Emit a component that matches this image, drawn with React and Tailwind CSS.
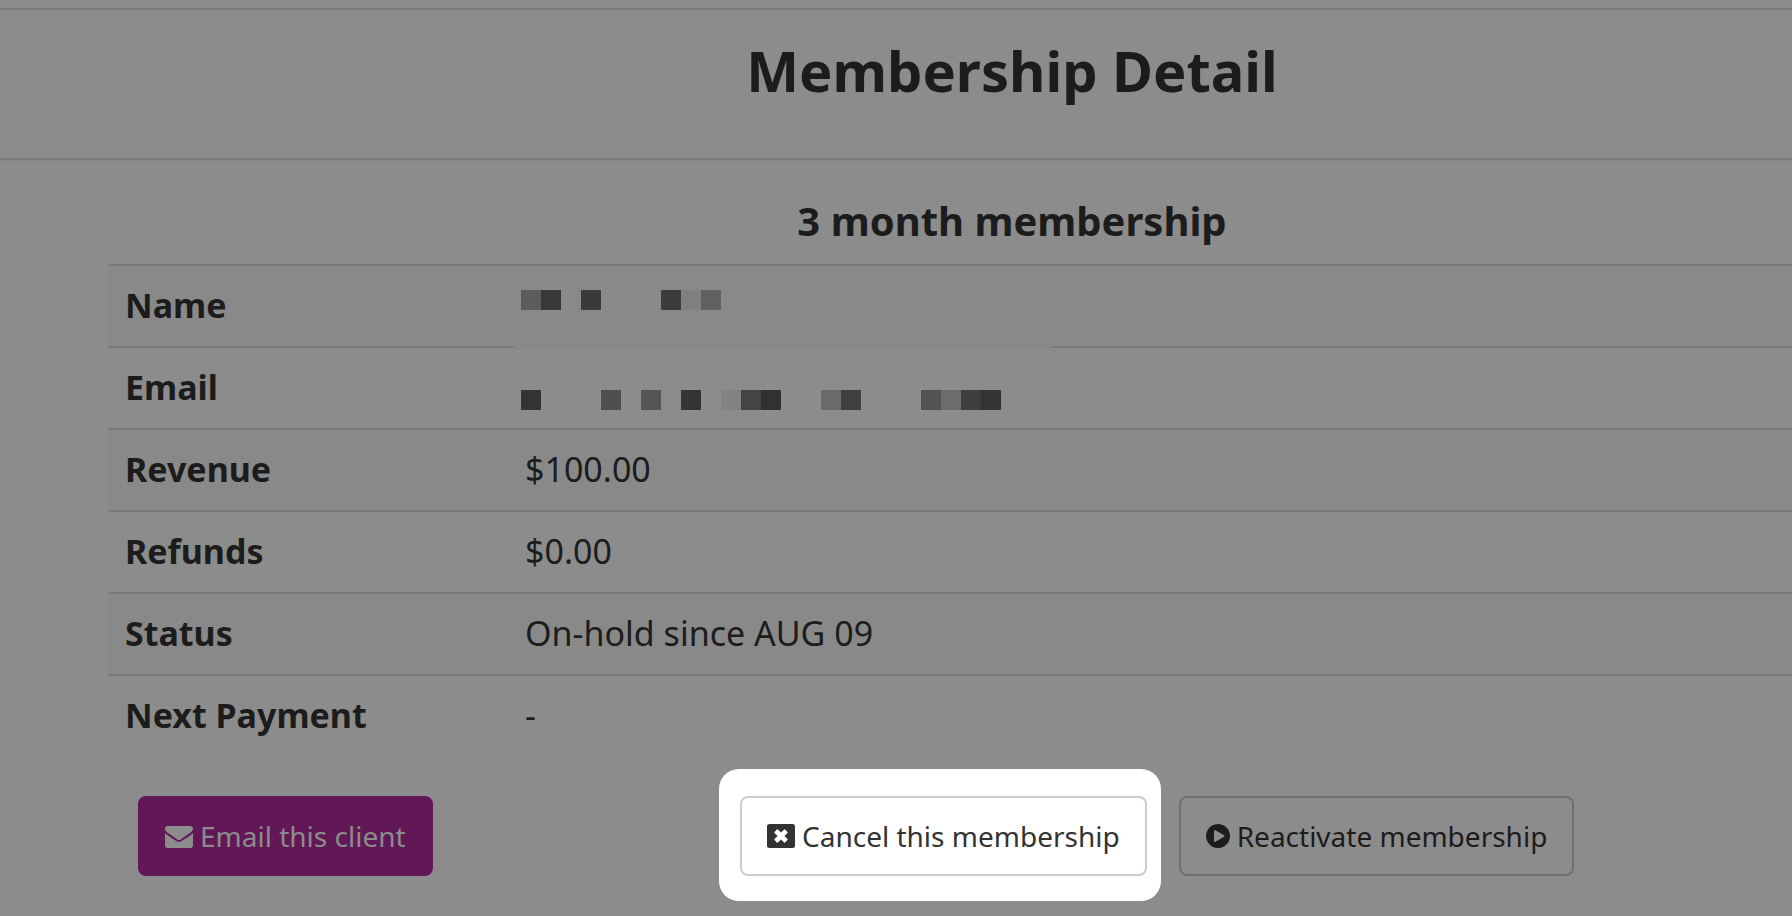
const rows = [
    {
        label: "Name",
        blocks: [
            "bg-[#5c5c5c]", "bg-[#393939]", "", "bg-[#3a3a3a]", "", "", "",
            "bg-[#3c3c3c]", "bg-[#808080]", "bg-[#616161]",
        ],
        blocksPosition: "top-6",
        coversBorder: true,
    },
    {
        label: "Email",
        blocks: [
            "bg-[#333333]", "", "", "bg-[#8b8b8b]", "bg-[#4f4f4f]", "", "bg-[#555555]", "",
            "bg-[#343434]", "", "bg-[#838383]", "bg-[#444444]", "bg-[#313131]", "", "",
            "bg-[#6a6a6a]", "bg-[#3f3f3f]", "", "", "", "bg-[#525252]", "bg-[#6c6c6c]",
            "bg-[#3e3e3e]", "bg-[#333333]", "", "bg-[#8b8b8b]",
        ],
        blocksPosition: "top-[42px]",
    },
    { label: "Revenue", value: "$100.00" },
    { label: "Refunds", value: "$0.00" },
    { label: "Status", value: "On-hold since AUG 09" },
    { label: "Next Payment", value: "-" },
];

const EnvelopeIcon = () => (
    <svg className="size-7 shrink-0" viewBox="0 0 1792 1792" fill="currentColor" aria-hidden="true">
        <path d="M1792 710v794q0 66-47 113t-113 47h-1472q-66 0-113-47t-47-113v-794q44 49 101 87 362 246 497 345 57 42 92.5 65.5t94.5 48 110 24.5h2q51 0 110-24.5t94.5-48 92.5-65.5q170-123 498-345 57-39 100-87zm0-294q0 79-49 151t-122 123q-376 261-468 325-10 7-42.5 31t-54 38.5-52 32.5-57.5 27-50 9h-2q-23 0-50-9t-57.5-27-52-32.5-54-38.5-42.5-31q-91-64-262-182.5t-205-142.5q-62-42-117-115.5t-55-136.5q0-78 41.5-130t118.5-52h1472q65 0 112.5 47t47.5 113z" />
    </svg>
);

const CloseBoxIcon = () => (
    <svg className="size-7 shrink-0" viewBox="0 0 28 28" aria-hidden="true">
        <rect x="0" y="2" width="28" height="24" rx="2.5" fill="currentColor" />
        <path
            d="M14 11.6l3.6-3.6 2.4 2.4-3.6 3.6 3.6 3.6-2.4 2.4-3.6-3.6-3.6 3.6-2.4-2.4 3.6-3.6-3.6-3.6 2.4-2.4z"
            fill="white"
            stroke="white"
            strokeWidth="1.4"
            strokeLinejoin="round"
        />
    </svg>
);

const PlayIcon = () => (
    <svg className="h-7 w-6 shrink-0" viewBox="128 0 1536 1792" fill="currentColor" aria-hidden="true">
        <path d="M1312 896q0-37-32-55l-544-320q-31-19-64-1-32 19-32 56v640q0 37 32 56 16 8 32 8 17 0 32-9l544-320q32-18 32-55zm352 0q0 209-103 385.5t-279.5 279.5-385.5 103-385.5-103-279.5-279.5-103-385.5 103-385.5 279.5-279.5 385.5-103 385.5 103 279.5 279.5 103 385.5z" />
    </svg>
);

const RedactedValue = ({ blocks, position, coversBorder }) => (
    <>
        {coversBorder && <div className="absolute -bottom-1 left-[6px] h-2 w-[536px] bg-[#898989]" />}
        <div className={`absolute left-[13px] flex ${position}`}>
            {blocks.map((color, i) => (
                <span key={i} className={`size-5 ${color}`} />
            ))}
        </div>
    </>
);

const App = () => {
    const buttonStyles = "flex h-20 items-center gap-[7px] whitespace-nowrap rounded-lg border-2 px-[25px] text-[28px] leading-10";

    return (
        <div className="min-h-screen overflow-hidden bg-[#8c8c8c] pt-2 font-['Noto_Sans',sans-serif] text-[#1c1c1c]">
            <header className="border-y-2 border-[#7a7a7a] pt-5 pb-12 pl-[232px] text-center shadow-xs">
                <h1 className="text-[56px] font-bold leading-20">Membership Detail</h1>
            </header>

            <main className="pl-[108px]">
                <h2 className="pt-[33px] pb-[15px] pl-[124px] text-center text-[40px] font-bold leading-14">3 month membership</h2>

                <table className="w-full table-fixed text-left text-[34px] leading-12">
                    <tbody>
                        {rows.map((row) => (
                            <tr key={row.label} className="h-[82px] border-t-2 border-[#7a7a7a] odd:bg-[#898989]">
                                <th scope="row" className="w-[400px] px-[17px] pb-[3px] font-bold">{row.label}</th>
                                <td className="relative px-[17px] pb-[3px]">
                                    {row.blocks ? (
                                        <RedactedValue
                                            blocks={row.blocks}
                                            position={row.blocksPosition}
                                            coversBorder={row.coversBorder}
                                        />
                                    ) : row.value}
                                </td>
                            </tr>
                        ))}
                    </tbody>
                </table>

                <div className="grid grid-cols-[581px_1fr] pt-3 pl-[30px]">
                    <div className="pt-[27px]">
                        <button type="button" className={`${buttonStyles} border-[#621757] bg-[#621757] text-[#8c8c8c]`}>
                            <EnvelopeIcon />
                            Email this client
                        </button>
                    </div>
                    <div className="flex items-start gap-[18px]">
                        <div className="rounded-[20px] bg-white pt-[27px] pr-[14px] pb-[25px] pl-[21px]">
                            <button type="button" className={`${buttonStyles} border-[#cccccc] bg-white text-[#333333]`}>
                                <CloseBoxIcon />
                                Cancel this membership
                            </button>
                        </div>
                        <div className="pt-[27px]">
                            <button type="button" className={`${buttonStyles} border-[#707070]`}>
                                <PlayIcon />
                                Reactivate membership
                            </button>
                        </div>
                    </div>
                </div>
            </main>
        </div>
    );
};

export default App;
